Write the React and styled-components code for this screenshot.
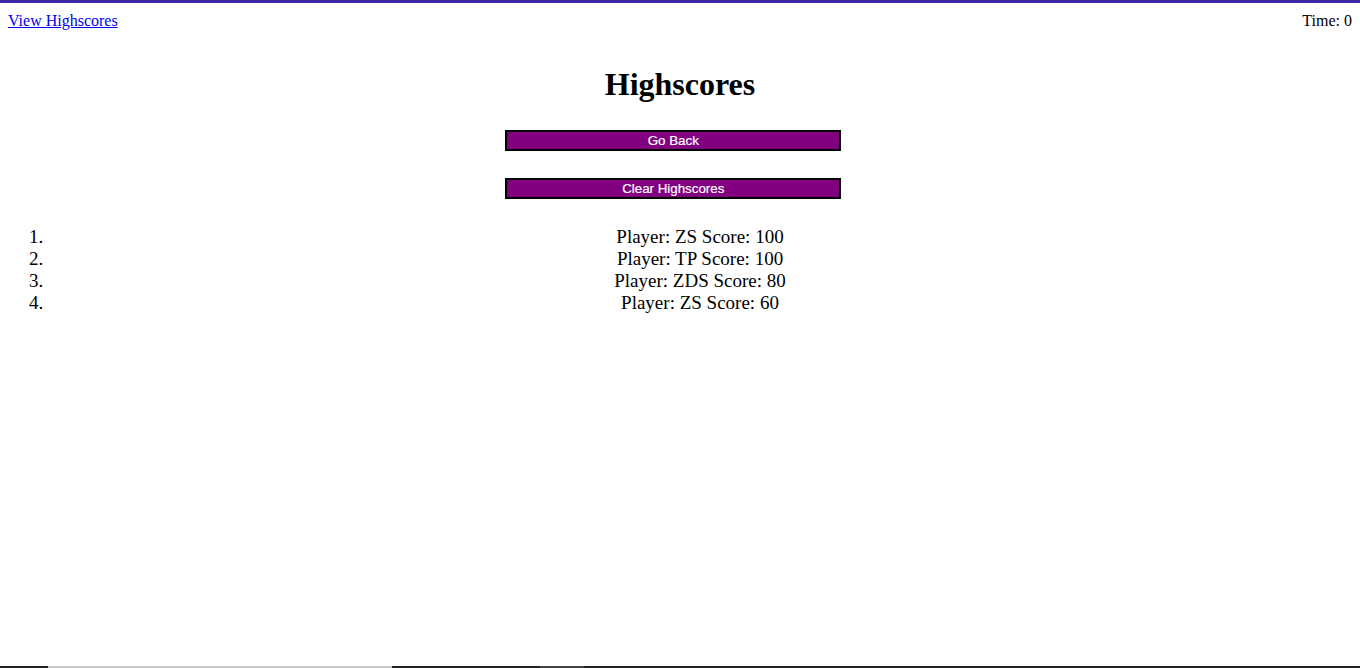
import React from "react";
import styled, { createGlobalStyle } from "styled-components";

const Global = createGlobalStyle`
  html, body { margin: 0; padding: 0; background: #fff; }
  body {
    border-top: 3px solid #3b2aa8;
    font-family: "Liberation Serif", "Times New Roman", serif;
    font-size: 16px;
    color: #000;
  }
`;

const Page = styled.div`
  padding: 0 8px;
`;

const Header = styled.header`
  display: flex;
  justify-content: space-between;
  align-items: baseline;
  padding-top: 9px;
  line-height: 18px;
`;

const Link = styled.a`
  color: #0000ee;
  text-decoration: underline;
  cursor: pointer;
`;

const Timer = styled.span``;

const Title = styled.h1`
  text-align: center;
  font-size: 32px;
  font-weight: bold;
  margin: 36px 0 27px;
  line-height: 37px;
`;

const Button = styled.button`
  display: block;
  width: 25%;
  margin: 0 0 27px 37%;
  height: 21px;
  padding: 0;
  background: #800080;
  color: #fff;
  border: 2px solid #000;
  font-family: "Liberation Sans", Arial, sans-serif;
  font-size: 13.33px;
  line-height: 17px;
  -webkit-text-stroke: 0.2px #fff;
`;

const List = styled.ol`
  margin: 27px 0 0;
  padding-left: 40px;
  font-size: 19px;
  line-height: 22px;
`;

const Item = styled.li`
  text-align: center;
`;

const BottomStrip = styled.div`
  position: fixed;
  left: 0;
  right: 0;
  bottom: 0;
  height: 2px;
  display: flex;
  background: #222;
`;

const Segment = styled.div`
  width: ${(p) => p.$w}px;
  margin-left: ${(p) => p.$l || 0}px;
  background: ${(p) => p.$c};
`;

const scores = [
  { name: "ZS", score: 100 },
  { name: "TP", score: 100 },
  { name: "ZDS", score: 80 },
  { name: "ZS", score: 60 },
];

export default function App() {
  return (
    <>
      <Global />
      <Page>
        <Header>
          <Link>View Highscores</Link>
          <Timer>Time: 0</Timer>
        </Header>
        <Title>Highscores</Title>
        <Button>Go Back</Button>
        <Button>Clear Highscores</Button>
        <List>
          {scores.map((s, i) => (
            <Item key={i}>
              Player: {s.name} Score: {s.score}
            </Item>
          ))}
        </List>
      </Page>
      <BottomStrip>
        <Segment $l={48} $w={344} $c="#c8c8c8" />
        <Segment $l={148} $w={44} $c="#444" />
      </BottomStrip>
    </>
  );
}
